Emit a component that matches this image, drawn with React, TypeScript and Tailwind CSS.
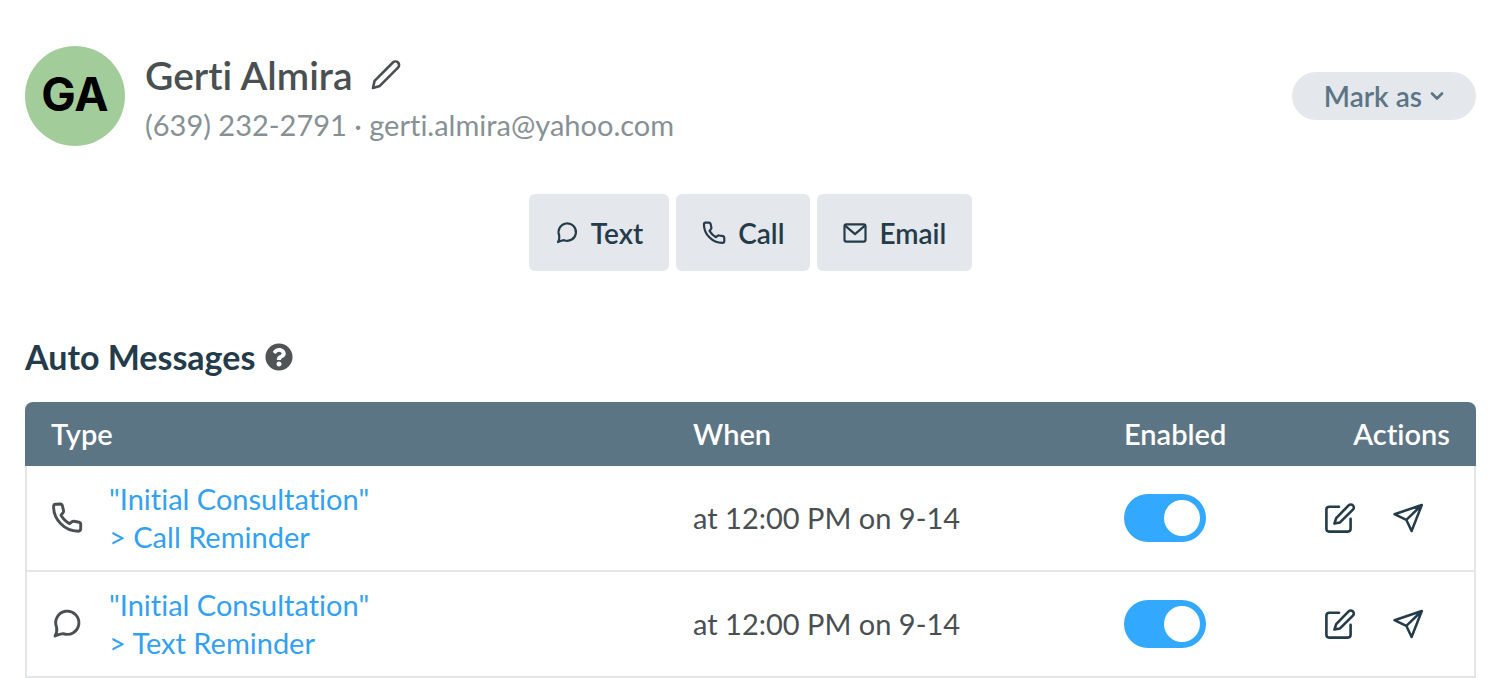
import { useState, type ReactNode } from "react";
import { FaQuestionCircle } from "react-icons/fa";

interface AutoMessage {
  id: string;
  kind: "call" | "text";
  template: string;
  label: string;
  when: string;
}

const messages: AutoMessage[] = [
  { id: "call", kind: "call", template: "Initial Consultation", label: "Call Reminder", when: "at 12:00 PM on 9-14" },
  { id: "text", kind: "text", template: "Initial Consultation", label: "Text Reminder", when: "at 12:00 PM on 9-14" },
];

/* ─── Icons ─────────────────────────────────────────────────────────────── */

interface IconProps {
  className?: string;
  strokeWidth?: number;
}

function Icon({ className = "size-8", strokeWidth = 2.9, children }: IconProps & { children: ReactNode }) {
  return (
    <svg
      viewBox="0 0 32 32"
      className={className}
      fill="none"
      stroke="currentColor"
      strokeWidth={strokeWidth}
      strokeLinecap="round"
      strokeLinejoin="round"
      aria-hidden="true"
    >
      {children}
    </svg>
  );
}

const PencilIcon = (props: IconProps) => (
  <Icon {...props}>
    <path d="M3 29 4.6 21.8 22.9 3.5a3.6 3.6 0 0 1 5.1 5.1L9.8 26.9Z" />
  </Icon>
);

const PhoneIcon = (props: IconProps) => (
  <Icon {...props}>
    <path d="M4.6 2.2 9.3 2Q11 2 11.4 3.8L12.5 8.5Q12.8 10 11.8 11L10 13.2Q13.5 19 18.6 21.6L20.8 19.8Q21.8 19 23.2 19.3L28 20.2Q29.7 20.6 29.7 22.2V26.6Q29.7 29.2 27.2 29.2 17 29.2 9.8 21.8 2.6 14.5 2.6 4.6 2.6 2.3 4.6 2.2Z" />
  </Icon>
);

const BubbleIcon = (props: IconProps) => (
  <Icon {...props}>
    <path d="M4 28Q6.4 24 5.6 19.2A11.6 11.6 0 1 1 12.2 25.6Q8.5 26 4 28Z" />
  </Icon>
);

const MailIcon = (props: IconProps) => (
  <Icon {...props}>
    <rect x="2" y="4.6" width="28" height="22.8" rx="2.4" />
    <path d="M2.8 6.2 16 17.4 29.2 6.2" />
  </Icon>
);

const EditIcon = (props: IconProps) => (
  <Icon {...props}>
    <path d="M15 4.7H5.2A2.8 2.8 0 0 0 2.4 7.5V26.8A2.8 2.8 0 0 0 5.2 29.6H23.8A2.8 2.8 0 0 0 26.6 26.8V16.8" />
    <path d="M10.4 21.6 12.2 16.2 24.6 3.4a3 3 0 0 1 4.3 4.3L16 20.4Z" />
  </Icon>
);

const SendIcon = (props: IconProps) => (
  <Icon {...props}>
    <path d="M2.5 12.2 29.8 3 19.6 29 14.3 17.8ZM14.3 17.8 29.8 3" />
  </Icon>
);

const ChevronIcon = () => (
  <svg viewBox="0 0 14 8" className="w-[14px] h-2" fill="none" stroke="currentColor" strokeWidth="2.6" strokeLinecap="round" strokeLinejoin="round" aria-hidden="true">
    <path d="m2 1.5 5 5 5-5" />
  </svg>
);

/* ─── Controls ──────────────────────────────────────────────────────────── */

function ContactButton({ icon, children }: { icon: ReactNode; children: ReactNode }) {
  return (
    <button
      type="button"
      className="flex items-center gap-3 h-[77px] px-[26px] rounded-md bg-[#e4e7eb] hover:bg-[#d9dde2] text-[#243b4a] text-[28px] font-semibold cursor-pointer"
    >
      {icon}
      {children}
    </button>
  );
}

function Toggle({ label }: { label: string }) {
  const [enabled, setEnabled] = useState(true);

  return (
    <label className="relative block w-[82px] h-12 cursor-pointer">
      <input
        type="checkbox"
        aria-label={label}
        checked={enabled}
        onChange={(e) => setEnabled(e.target.checked)}
        className="peer appearance-none block w-full h-full rounded-full bg-gray-300 checked:bg-[#33a8ff] cursor-pointer"
      />
      <span className="absolute top-1.5 left-1.5 size-9 rounded-full bg-white transition-transform peer-checked:translate-x-[34px]" />
    </label>
  );
}

function MessageRow({ message }: { message: AutoMessage }) {
  const { kind, template, label, when } = message;

  return (
    <tr>
      <td className="border-l-2 border-b-2 border-[#e4e5e7] pl-6 py-[14px]">
        <div className="flex items-center gap-[26px]">
          <span className="text-[#4a5052]">{kind === "call" ? <PhoneIcon /> : <BubbleIcon />}</span>
          <a href="#" className="text-[#33a1f2] leading-[38px] hover:underline">
            "{template}"
            <br />
            &gt; {label}
          </a>
        </div>
      </td>
      <td className="border-b-2 border-[#e4e5e7] pl-[26px]">{when}</td>
      <td className="border-b-2 border-[#e4e5e7] pl-[26px]">
        <Toggle label={`${label} enabled`} />
      </td>
      <td className="border-r-2 border-b-2 border-[#e4e5e7] pr-[50px]">
        <div className="flex justify-end gap-9 text-[#243b4a]">
          <button type="button" aria-label={`Edit ${label}`} className="cursor-pointer">
            <EditIcon strokeWidth={2.6} />
          </button>
          <button type="button" aria-label={`Send ${label} now`} className="cursor-pointer">
            <SendIcon strokeWidth={2.5} />
          </button>
        </div>
      </td>
    </tr>
  );
}

/* ─── Page ──────────────────────────────────────────────────────────────── */

export default function App() {
  return (
    <main className="bg-white pt-[42px] pl-[25px] pr-[14px] font-['Lato',sans-serif] text-[29px] text-[#4a5052] [font-variant-ligatures:none]">
      <header className="flex items-center">
        <div className="flex items-center justify-center size-[100px] pb-1 rounded-full bg-[#a2cd9b] font-['Inter',sans-serif] text-[46px] font-bold text-black">
          GA
        </div>
        <div className="ml-5 pt-2 flex-1">
          <div className="flex items-center gap-[18px]">
            <h1 className="text-[39px] leading-[50px] font-semibold">Gerti Almira</h1>
            <button type="button" aria-label="Edit contact" className="cursor-pointer">
              <PencilIcon strokeWidth={2.6} />
            </button>
          </div>
          <p className="leading-[50px] text-[#879195]">(639) 232-2791 · gerti.almira@yahoo.com</p>
        </div>
        <button type="button" className="flex items-center gap-2 h-12 px-8 rounded-full bg-[#e4e7eb] text-[#5c7585] text-[28px] font-semibold cursor-pointer">
          Mark as
          <ChevronIcon />
        </button>
      </header>

      <div className="flex justify-center gap-[7px] mt-11">
        <ContactButton icon={<BubbleIcon className="size-6" />}>Text</ContactButton>
        <ContactButton icon={<PhoneIcon className="size-6" />}>Call</ContactButton>
        <ContactButton icon={<MailIcon className="size-6" />}>Email</ContactButton>
      </div>

      <section>
        <div className="flex items-center gap-[10px] mt-[66px] mb-[25px]">
          <h2 className="text-[34px] leading-10 font-bold text-[#243b4a]">Auto Messages</h2>
          <button type="button" aria-label="About auto messages" className="text-[#505456] cursor-pointer">
            <FaQuestionCircle className="size-7" />
          </button>
        </div>

        <table className="w-full table-fixed border-separate border-spacing-0">
          <thead>
            <tr className="h-16 text-left text-white">
              <th className="w-[44.25%] pl-[26px] rounded-tl-lg bg-[#5c7585] font-semibold">Type</th>
              <th className="w-[29.7%] pl-[26px] bg-[#5c7585] font-semibold">When</th>
              <th className="w-[11%] pl-[26px] bg-[#5c7585] font-semibold">Enabled</th>
              <th className="pr-[26px] rounded-tr-lg bg-[#5c7585] font-semibold text-right">Actions</th>
            </tr>
          </thead>
          <tbody>
            {messages.map((m) => (
              <MessageRow key={m.id} message={m} />
            ))}
          </tbody>
        </table>
      </section>
    </main>
  );
}
